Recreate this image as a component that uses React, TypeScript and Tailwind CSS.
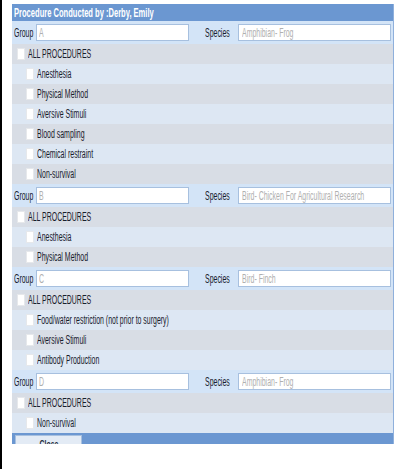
const font = { fontFamily: '"Liberation Sans", Arial, sans-serif' };

type Group = { name: string; species: string; procedures: string[] };

const groups: Group[] = [
  {
    name: "A",
    species: "Amphibian- Frog",
    procedures: ["Anesthesia", "Physical Method", "Aversive Stimuli", "Blood sampling", "Chemical restraint", "Non-survival"],
  },
  {
    name: "B",
    species: "Bird- Chicken For Agricultural Research",
    procedures: ["Anesthesia", "Physical Method"],
  },
  {
    name: "C",
    species: "Bird- Finch",
    procedures: ["Food/water restriction (not prior to surgery)", "Aversive Stimuli", "Antibody Production"],
  },
  {
    name: "D",
    species: "Amphibian- Frog",
    procedures: ["Non-survival"],
  },
];

// the screenshot text is very condensed, squeeze it horizontally
function Txt({ children }: { children: React.ReactNode }) {
  return <span className="inline-block origin-left scale-x-[0.58] whitespace-nowrap">{children}</span>;
}

function Box() {
  return <span className="inline-block h-[12px] w-[8px] shrink-0 border border-[#e6e8eb] bg-white" />;
}

function Row({ label, indent, odd }: { label: string; indent: boolean; odd: boolean }) {
  return (
    <div
      className={`flex h-[20px] items-center gap-[3px] text-[12px] text-[#18202c] ${
        odd ? "bg-[#dde7f3]" : "bg-[#d8dde5]"
      } ${indent ? "pl-[14px]" : "pl-[5px]"}`}
    >
      <Box />
      <Txt>{label}</Txt>
    </div>
  );
}

function GroupBlock({ g }: { g: Group }) {
  return (
    <div>
      <div className="flex h-[23px] items-center bg-[#d3e4f7] pl-[2px] text-[12px] text-[#18202c]">
        <span className="w-[22px]">
          <Txt>Group</Txt>
        </span>
        <div className="flex h-[17px] w-[153px] items-center border border-[#a7c0df] bg-white pl-[2px] text-[#b0b0b0]">
          <Txt>{g.name}</Txt>
        </div>
        <span className="ml-[16px] w-[33px]">
          <Txt>Species</Txt>
        </span>
        <div className="flex h-[17px] w-[153px] items-center border border-[#a7c0df] bg-white pl-[3px] text-[#b0b0b0]">
          <Txt>{g.species}</Txt>
        </div>
      </div>
      <Row label="ALL PROCEDURES" indent={false} odd={false} />
      {g.procedures.map((p, i) => (
        <Row key={p + i} label={p} indent odd={i % 2 === 0} />
      ))}
    </div>
  );
}

export default function App() {
  return (
    <div className="h-[469px] w-[400px] border-l-2 border-black bg-white pl-[10px] pt-[4px]" style={font}>
      <div className="h-[440px] w-[382px] overflow-hidden border-r border-[#8fb0dc] bg-[#dde7f3]">
        <div className="flex h-[17px] items-center bg-[#6b97d1] pl-[2px] text-[12px] font-bold text-white">
          <span className="inline-block origin-left scale-x-[0.63] whitespace-nowrap">
            Procedure Conducted by :Derby, Emily
          </span>
        </div>
        {groups.map((g) => (
          <GroupBlock key={g.name} g={g} />
        ))}
        <div className="h-[20px] bg-[#6b97d1] pl-[3px] pt-[2px]">
          <button
            type="button"
            className="flex h-[18px] w-[67px] items-center justify-center border border-[#a7c0df] bg-[#e3ebf5] text-[11px] font-bold text-[#1d2a3a]"
          >
            <span className="inline-block scale-x-[0.63]">Close</span>
          </button>
        </div>
      </div>
    </div>
  );
}
